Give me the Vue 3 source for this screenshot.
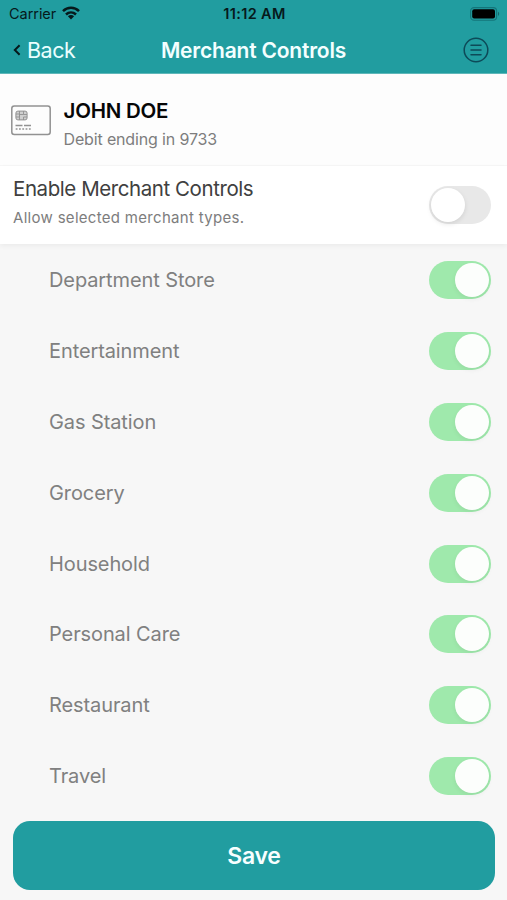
<script setup>
import { reactive, ref } from 'vue'

const enabled = ref(false)
const merchants = reactive([
  { name: 'Department Store', on: true },
  { name: 'Entertainment', on: true },
  { name: 'Gas Station', on: true },
  { name: 'Grocery', on: true },
  { name: 'Household', on: true },
  { name: 'Personal Care', on: true },
  { name: 'Restaurant', on: true },
  { name: 'Travel', on: true }
])
</script>

<template>
  <main class="screen">
    <header class="header">
      <div class="status">
        <div class="carrier">
          <span>Carrier</span>
          <svg class="wifi" viewBox="0 0 18 14">
            <g fill="none" stroke="#06191b" stroke-width="2.5">
              <path d="M1 5.2C5.5.7 12.500.7 17 5.2" />
              <path d="M4 8.500C6.900 5.700 11.100 5.700 14 8.500" />
            </g>
            <path d="M5.900 10.300C7.700 8.700 10.300 8.700 12.100 10.300L9 13.500Z" fill="#06191b" />
          </svg>
        </div>
        <span class="time">11:12 AM</span>
        <svg class="battery" viewBox="0 0 30 14">
          <rect x=".6" y=".6" width="26" height="12.600" rx="3.500" fill="none" stroke="#14757a" stroke-width="1.100" />
          <rect x="2.200" y="2.200" width="22.800" height="9.400" rx="2" fill="#000" />
          <path d="M28 4.800C29.600 5.500 29.600 8.300 28 9Z" fill="#14686c" />
        </svg>
      </div>
      <nav class="nav">
        <button class="back">
          <svg class="chevron" viewBox="0 0 8 12"><path d="M6.600 1.200 1.800 6l4.800 4.800" fill="none" stroke="#06191b" stroke-width="2" /></svg>
          <span>Back</span>
        </button>
        <h1 class="title">Merchant Controls</h1>
        <button class="menu" aria-label="Menu">
          <svg viewBox="0 0 26 26" fill="none" stroke="#0d4a58" stroke-width="1.500" stroke-linecap="round">
            <circle cx="13" cy="13" r="11.800" />
            <path d="M8 8.300h10M8 13h10M8 17.700h10" />
          </svg>
        </button>
      </nav>
    </header>

    <section class="account">
      <svg class="card" viewBox="0 0 40 31" fill="none" stroke="#929292">
        <rect x=".8" y=".9" width="38.400" height="28.600" rx="2.500" stroke-width="1.500" />
        <rect x="4.900" y="6.100" width="11.200" height="8.800" rx="2" fill="#d0d0d0" />
        <path d="M5 9h3.500v3H5M8.500 6v9M12.500 6v3.500h3.500M12.500 15v-3h3.500M8.500 9.500h4" stroke-width=".9" />
        <path d="M4.500 20.500h7M13 20.500h7" stroke-width="1.300" />
        <path d="M4.700 24h16" stroke-width="1.500" stroke-dasharray="1.800 1.500" />
      </svg>
      <div>
        <h2 class="holder">JOHN DOE</h2>
        <p class="ending">Debit ending in 9733</p>
      </div>
    </section>

    <section class="enable">
      <div>
        <h2 class="enable-title">Enable Merchant Controls</h2>
        <p class="enable-note">Allow selected merchant types.</p>
      </div>
      <button class="switch" :class="{ on: enabled }" role="switch" :aria-checked="enabled" aria-label="Enable Merchant Controls" @click="enabled = !enabled"><span class="knob" /></button>
    </section>

    <ul class="merchants">
      <li v-for="item in merchants" :key="item.name" class="merchant">
        <span>{{ item.name }}</span>
        <button class="switch" :class="{ on: item.on }" role="switch" :aria-checked="item.on" :aria-label="item.name" :disabled="!enabled" @click="item.on = !item.on"><span class="knob" /></button>
      </li>
    </ul>

    <button class="save">Save</button>
  </main>
</template>

<style>
body { margin: 0; background: #f7f7f7; }
</style>

<style scoped>
* { box-sizing: border-box; }
.screen { width: 507px; height: 900px; overflow: hidden; background: #f7f7f7; font-family: Inter, "Liberation Sans", sans-serif; }
h1, h2, p, ul { margin: 0; padding: 0; }
button { border: 0; padding: 0; background: none; font-family: inherit; }
svg { display: block; }
.header { height: 73.500px; background: #219da0; border-bottom: 1px solid #5fb7b9; }
.status { display: grid; grid-template-columns: 1fr auto 1fr; align-items: center; height: 27px; padding: 0 7px 0 9px; color: #06191b; }
.carrier { display: flex; align-items: center; gap: 6px; font-size: 14.500px; letter-spacing: -.05px; }
.wifi { width: 18px; height: 14px; margin-top: -2px; }
.time { font-size: 14.500px; font-weight: 600; letter-spacing: .35px; }
.battery { width: 30px; height: 14px; justify-self: end; }
.nav { display: grid; grid-template-columns: 1fr auto 1fr; align-items: center; height: 46px; padding: 0 18px 0 13px; }
.back { display: flex; align-items: center; gap: 6px; color: #eaffff; font-size: 21.500px; letter-spacing: -.5px; }
.chevron { width: 8px; height: 12px; }
.title { padding-left: 5px; color: #f3ffff; font-size: 21px; font-weight: 600; letter-spacing: -.2px; }
.menu { justify-self: end; width: 26px; height: 26px; }
.account { display: flex; gap: 12.500px; height: 92px; padding: 23px 11px 0; background: #fdfdfd; border-bottom: 1px solid #f7f7f7; }
.card { width: 40px; height: 31px; margin-top: 8px; }
.holder { color: #060606; font-size: 20.500px; line-height: 28px; font-weight: 600; letter-spacing: -.25px; }
.ending { margin-top: 3px; color: #7d7d7d; font-size: 16px; line-height: 22px; letter-spacing: -.15px; }
.enable { display: flex; justify-content: space-between; height: 78.500px; padding: 9px 16px 0 13px; background: #fff; box-shadow: 0 2px 5px rgba(0, 0, 0, .05); }
.enable-title { color: #404040; font-size: 20.500px; line-height: 28px; font-weight: 400; letter-spacing: -.43px; }
.enable-note { margin-top: 4px; color: #7d7d7d; font-size: 15px; line-height: 22px; letter-spacing: .3px; }
.enable .switch { margin-top: 11.500px; }
.switch { flex: none; display: flex; align-items: center; width: 62.500px; height: 38px; padding: 2px; border-radius: 19px; background: #e8e8e8; }
.switch.on { justify-content: flex-end; background: #9fe9ac; }
.knob { width: 34px; height: 34px; border-radius: 50%; background: #fff; box-shadow: 0 2px 5px rgba(0, 0, 0, .1); }
.switch.on .knob { background: #fcfefc; box-shadow: 0 2px 5px rgba(0, 0, 0, .06); }
.merchants { list-style: none; padding-top: .8px; }
.merchant { display: flex; align-items: center; justify-content: space-between; height: 70.850px; padding: 0 16px 0 49px; color: #808080; font-size: 20px; letter-spacing: -.1px; }
.save { display: block; width: 482px; height: 69.500px; margin: 9.300px 0 0 13px; padding-top: 1px; border-radius: 17px; background: #219da0; color: #f7ffff; font-size: 23px; font-weight: 600; letter-spacing: -.3px; }
</style>
